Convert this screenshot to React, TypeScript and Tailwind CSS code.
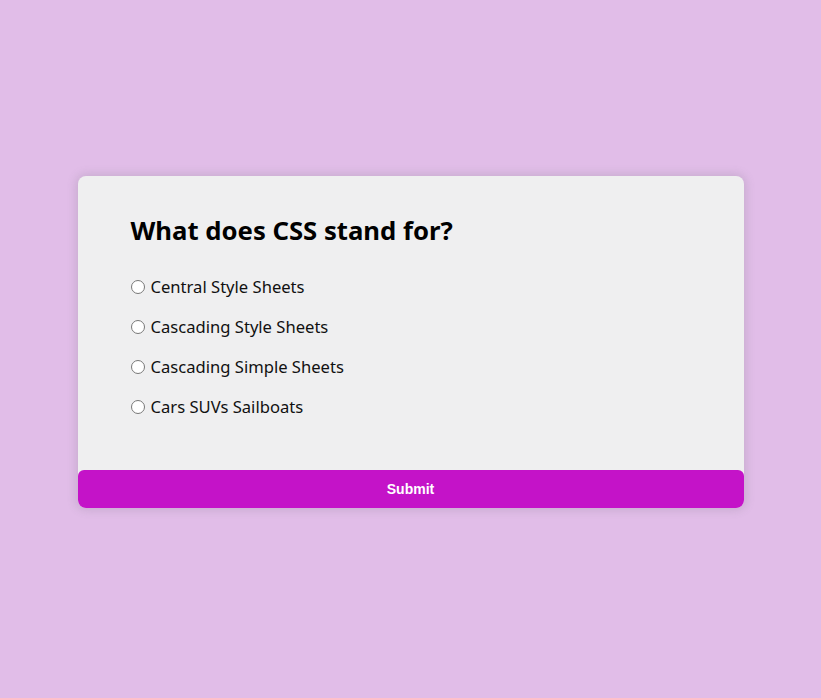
import React, { useState } from 'react'

const answers = [
    { id: 'a', text: 'Central Style Sheets' },
    { id: 'b', text: 'Cascading Style Sheets' },
    { id: 'c', text: 'Cascading Simple Sheets' },
    { id: 'd', text: 'Cars SUVs Sailboats' },
]

const App = () => {
    const [picked, setPicked] = useState<string | null>(null)

    return (
        <div className="min-h-screen w-full bg-[#e1bde8] flex justify-center pt-[176px]">
            <div className="w-[666px] h-fit bg-[#efeff0] rounded-[8px] shadow-[0_0_10px_2px_rgba(100,100,111,0.2)] overflow-hidden">
                {/* Question */}
                <div className="pt-[39px] pb-[35px] px-[53px] font-['Noto_Sans',sans-serif]">
                    <h2 className="text-[25.7px] leading-[32px] font-bold text-black mb-[28px]">
                        What does CSS stand for?
                    </h2>
                    <ul className="flex flex-col">
                        {answers.map((a) => (
                            <li key={a.id} className="h-[40px] flex items-start text-[16.6px] leading-[24px] text-[#111]">
                                <label className="flex items-center cursor-pointer">
                                    <input
                                        type="radio"
                                        name="answer"
                                        className="m-0 mr-[6px] w-[14px] h-[14px]"
                                        checked={picked === a.id}
                                        onChange={() => setPicked(a.id)}
                                    />
                                    {a.text}
                                </label>
                            </li>
                        ))}
                    </ul>
                </div>

                <button className="block w-full h-[38px] bg-[#c413c8] text-white text-[14px] font-bold rounded-[6px] font-['Liberation_Sans',Arial,sans-serif]">
                    Submit
                </button>
            </div>
        </div>
    )
}

export default App
